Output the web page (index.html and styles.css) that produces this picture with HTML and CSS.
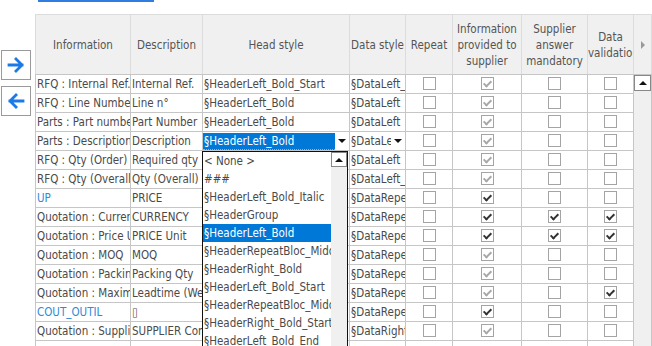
FILE: index.html
```html
<!DOCTYPE html>
<html lang="en">
<head>
    <meta charset="UTF-8">
    <meta name="viewport" content="width=device-width, initial-scale=1.0">
    <title>Questionnaire Columns</title>
    <link rel="stylesheet" href="styles.css">
</head>
<body>
    <!-- Link underline (page is scrolled) -->
    <div class="link-line"></div>

    <div class="editor">
        <!-- Move buttons -->
        <div class="movers">
            <button class="mover" title="Add">
                <svg width="20" height="20" viewBox="0 0 20 20"><path d="M3 10 H16 M10 4 L16 10 L10 16" fill="none" stroke="#1c7ae6" stroke-width="2.8" stroke-linecap="square"/></svg>
            </button>
            <button class="mover" title="Remove">
                <svg width="20" height="20" viewBox="0 0 20 20"><path d="M17 10 H4 M10 4 L4 10 L10 16" fill="none" stroke="#1c7ae6" stroke-width="2.8" stroke-linecap="square"/></svg>
            </button>
        </div>

        <!-- Columns grid -->
        <div class="grid-wrap">
            <table class="grid">
                <colgroup>
                    <col style="width: 95px">
                    <col style="width: 72px">
                    <col style="width: 147px">
                    <col style="width: 56px">
                    <col style="width: 47px">
                    <col style="width: 69px">
                    <col style="width: 66px">
                    <col style="width: 46px">
                    <col style="width: 18px">
                </colgroup>
                <thead>
                    <tr>
                        <th>Information</th>
                        <th>Description</th>
                        <th>Head style</th>
                        <th class="nowrap">Data style</th>
                        <th>Repeat</th>
                        <th>Information provided to supplier</th>
                        <th>Supplier answer mandatory</th>
                        <th class="clip">Data validation</th>
                        <th class="hscroll"><span class="tri-right"></span></th>
                    </tr>
                </thead>
                <tbody>
                    <tr>
                        <td>RFQ : Internal Ref.</td>
                        <td>Internal Ref.</td>
                        <td>§HeaderLeft_Bold_Start</td>
                        <td>§DataLeft_Start</td>
                        <td class="box"><span class="check"></span></td>
                        <td class="box"><span class="check grey"></span></td>
                        <td class="box"><span class="check"></span></td>
                        <td class="box"><span class="check"></span></td>
                        <td class="vscroll" rowspan="15"><span class="scroll-up"><span class="tri-up"></span></span></td>
                    </tr>
                    <tr>
                        <td>RFQ : Line Number</td>
                        <td>Line n°</td>
                        <td>§HeaderLeft_Bold</td>
                        <td>§DataLeft</td>
                        <td class="box"><span class="check"></span></td>
                        <td class="box"><span class="check grey"></span></td>
                        <td class="box"><span class="check"></span></td>
                        <td class="box"><span class="check"></span></td>
                    </tr>
                    <tr>
                        <td>Parts : Part number</td>
                        <td>Part Number</td>
                        <td>§HeaderLeft_Bold</td>
                        <td>§DataLeft</td>
                        <td class="box"><span class="check"></span></td>
                        <td class="box"><span class="check grey"></span></td>
                        <td class="box"><span class="check"></span></td>
                        <td class="box"><span class="check"></span></td>
                    </tr>
                    <tr>
                        <td>Parts : Description</td>
                        <td>Description</td>
                        <td class="editing">
                            <div class="select focused">
                                <span class="select-value">§HeaderLeft_Bold</span>
                                <span class="select-arrow"><span class="tri-down"></span></span>
                            </div>
                        </td>
                        <td class="editing">
                            <div class="select">
                                <span class="select-value">§DataLeft</span>
                                <span class="select-arrow"><span class="tri-down"></span></span>
                            </div>
                        </td>
                        <td class="box"><span class="check"></span></td>
                        <td class="box"><span class="check grey"></span></td>
                        <td class="box"><span class="check"></span></td>
                        <td class="box"><span class="check"></span></td>
                    </tr>
                    <tr>
                        <td>RFQ : Qty (Order)</td>
                        <td>Required qty</td>
                        <td></td>
                        <td>§DataLeft</td>
                        <td class="box"><span class="check"></span></td>
                        <td class="box"><span class="check grey"></span></td>
                        <td class="box"><span class="check"></span></td>
                        <td class="box"><span class="check"></span></td>
                    </tr>
                    <tr>
                        <td>RFQ : Qty (Overall)</td>
                        <td>Qty (Overall)</td>
                        <td></td>
                        <td>§DataLeft_Start</td>
                        <td class="box"><span class="check"></span></td>
                        <td class="box"><span class="check grey"></span></td>
                        <td class="box"><span class="check"></span></td>
                        <td class="box"><span class="check"></span></td>
                    </tr>
                    <tr>
                        <td class="custom">UP</td>
                        <td>PRICE</td>
                        <td></td>
                        <td>§DataRepeatBloc_Middle</td>
                        <td class="box"><span class="check"></span></td>
                        <td class="box"><span class="check on"></span></td>
                        <td class="box"><span class="check"></span></td>
                        <td class="box"><span class="check"></span></td>
                    </tr>
                    <tr>
                        <td>Quotation : Currency</td>
                        <td>CURRENCY</td>
                        <td></td>
                        <td>§DataRepeatBloc_Middle</td>
                        <td class="box"><span class="check"></span></td>
                        <td class="box"><span class="check on"></span></td>
                        <td class="box"><span class="check on"></span></td>
                        <td class="box"><span class="check on"></span></td>
                    </tr>
                    <tr>
                        <td>Quotation : Price Unit</td>
                        <td>PRICE Unit</td>
                        <td></td>
                        <td>§DataRepeatBloc_Middle</td>
                        <td class="box"><span class="check"></span></td>
                        <td class="box"><span class="check on"></span></td>
                        <td class="box"><span class="check on"></span></td>
                        <td class="box"><span class="check on"></span></td>
                    </tr>
                    <tr>
                        <td>Quotation : MOQ</td>
                        <td>MOQ</td>
                        <td></td>
                        <td>§DataRepeatBloc_Middle</td>
                        <td class="box"><span class="check"></span></td>
                        <td class="box"><span class="check grey"></span></td>
                        <td class="box"><span class="check"></span></td>
                        <td class="box"><span class="check"></span></td>
                    </tr>
                    <tr>
                        <td>Quotation : Packing Qty</td>
                        <td>Packing Qty</td>
                        <td></td>
                        <td>§DataRepeatBloc_Middle</td>
                        <td class="box"><span class="check"></span></td>
                        <td class="box"><span class="check grey"></span></td>
                        <td class="box"><span class="check"></span></td>
                        <td class="box"><span class="check"></span></td>
                    </tr>
                    <tr>
                        <td>Quotation : Maximum leadtime</td>
                        <td>Leadtime (Weeks)</td>
                        <td></td>
                        <td>§DataRepeatBloc_Middle</td>
                        <td class="box"><span class="check"></span></td>
                        <td class="box"><span class="check grey"></span></td>
                        <td class="box"><span class="check"></span></td>
                        <td class="box"><span class="check on"></span></td>
                    </tr>
                    <tr>
                        <td class="custom">COUT_OUTIL</td>
                        <td>▯</td>
                        <td></td>
                        <td>§DataRepeatBloc_Middle</td>
                        <td class="box"><span class="check"></span></td>
                        <td class="box"><span class="check on"></span></td>
                        <td class="box"><span class="check"></span></td>
                        <td class="box"><span class="check"></span></td>
                    </tr>
                    <tr>
                        <td>Quotation : Supplier comment</td>
                        <td>SUPPLIER Comment</td>
                        <td></td>
                        <td>§DataRight</td>
                        <td class="box"><span class="check"></span></td>
                        <td class="box"><span class="check grey"></span></td>
                        <td class="box"><span class="check"></span></td>
                        <td class="box"><span class="check"></span></td>
                    </tr>
                    <tr>
                        <td></td>
                        <td></td>
                        <td></td>
                        <td></td>
                        <td></td>
                        <td></td>
                        <td></td>
                        <td></td>
                    </tr>
                </tbody>
            </table>

            <!-- Open dropdown of the head style cell -->
            <div class="style-list">
                <ul class="style-options">
                    <li>&lt; None &gt;</li>
                    <li>###</li>
                    <li>§HeaderLeft_Bold_Italic</li>
                    <li>§HeaderGroup</li>
                    <li class="selected">§HeaderLeft_Bold</li>
                    <li>§HeaderRepeatBloc_Middle</li>
                    <li>§HeaderRight_Bold</li>
                    <li>§HeaderLeft_Bold_Start</li>
                    <li>§HeaderRepeatBloc_Middle</li>
                    <li>§HeaderRight_Bold_Start</li>
                    <li>§HeaderLeft_Bold_End</li>
                </ul>
                <div class="list-scroll">
                    <span class="scroll-up"><span class="tri-up"></span></span>
                </div>
            </div>
        </div>
    </div>
</body>
</html>
```

FILE: styles.css
```css
/* General Styles */
* {
    margin: 0;
    padding: 0;
    box-sizing: border-box;
}

body {
    background: #fff;
    font-family: "DejaVu Sans Condensed", "DejaVu Sans", sans-serif;
    font-stretch: condensed;
    font-size: 11.5px;
    color: #4a4a4a;
    overflow: hidden;
}

.link-line {
    width: 116px;
    height: 2px;
    margin-left: 38px;
    background: #2f7de1;
}

.editor {
    display: flex;
    margin-top: 12px;
}

/* Move buttons */
.movers {
    width: 36px;
    padding: 36px 0 0 1px;
    display: flex;
    flex-direction: column;
    gap: 6px;
}

.mover {
    width: 30px;
    height: 30px;
    border: 1px solid #9a9a9a;
    background: #fff;
    display: flex;
    align-items: center;
    justify-content: center;
}

/* Grid */
.grid-wrap {
    position: relative;
}

.grid {
    border-collapse: collapse;
    table-layout: fixed;
    width: 616px;
}

.grid th {
    background: #f0f0f0;
    border: 1px solid #dcdcdc;
    border-bottom-color: #c6c6c6;
    height: 60px;
    padding: 0 2px;
    font-weight: normal;
    color: #555;
    line-height: 16px;
    overflow: hidden;
}

.grid th.clip,
.grid th.nowrap {
    padding: 0;
    white-space: nowrap;
}

.grid th.clip {
    white-space: normal;
}

.grid td {
    border: 1px solid #c6c6c6;
    height: 19px;
    padding: 0 1px;
    line-height: 17px;
    white-space: nowrap;
    overflow: hidden;
}

.grid td.custom {
    color: #2f8ad8;
}

.grid td.box {
    text-align: center;
    padding: 0;
}

/* Checkboxes */
.check {
    position: relative;
    display: inline-block;
    width: 13px;
    height: 13px;
    border: 1px solid #a4a4a4;
    background: #fff;
    vertical-align: middle;
    margin-top: -2px;
}

.check.grey::after,
.check.on::after {
    content: "";
    position: absolute;
    left: 3px;
    top: 1px;
    width: 3px;
    height: 6px;
    border: solid #a8a8a8;
    border-width: 0 2px 2px 0;
    transform: rotate(45deg);
}

.check.on::after {
    border-color: #333;
}

/* Scroll parts */
.grid th.hscroll {
    padding: 0;
    text-align: center;
}

.tri-right {
    display: inline-block;
    border-top: 4px solid transparent;
    border-bottom: 4px solid transparent;
    border-left: 4px solid #999;
}

.grid td.vscroll {
    background: #f0f0f0;
    vertical-align: top;
    padding: 0;
    border-bottom: none;
}

.scroll-up {
    display: flex;
    align-items: center;
    justify-content: center;
    width: 17px;
    height: 16px;
    border: 1px solid #888;
    background: #fff;
}

.tri-up {
    border-left: 4px solid transparent;
    border-right: 4px solid transparent;
    border-bottom: 4px solid #111;
}

.tri-down {
    border-left: 4px solid transparent;
    border-right: 4px solid transparent;
    border-top: 4px solid #111;
}

/* Cell editors */
.grid td.editing {
    padding: 0;
}

.select {
    display: flex;
    height: 17px;
}

.select-value {
    flex: 1;
    overflow: hidden;
    padding-left: 1px;
}

.select.focused .select-value {
    background: #0078d7;
    color: #fff;
    border-bottom: 1px dotted #e0a060;
}

.select-arrow {
    width: 14px;
    display: flex;
    align-items: center;
    justify-content: center;
    background: #fff;
}

/* Open dropdown list */
.style-list {
    position: absolute;
    left: 167px;
    top: 137px;
    width: 146px;
    height: 215px;
    display: flex;
    border: 1px solid #111;
    background: #fff;
    overflow: hidden;
}

.style-options {
    list-style: none;
    flex: 1;
    overflow: hidden;
}

.style-options li {
    height: 18px;
    line-height: 18px;
    padding-left: 1px;
    white-space: nowrap;
    overflow: hidden;
}

.style-options li.selected {
    background: #0078d7;
    color: #fff;
}

.list-scroll {
    width: 16px;
    background: #f0f0f0;
}

.list-scroll .scroll-up {
    width: 16px;
    height: 15px;
}
```
